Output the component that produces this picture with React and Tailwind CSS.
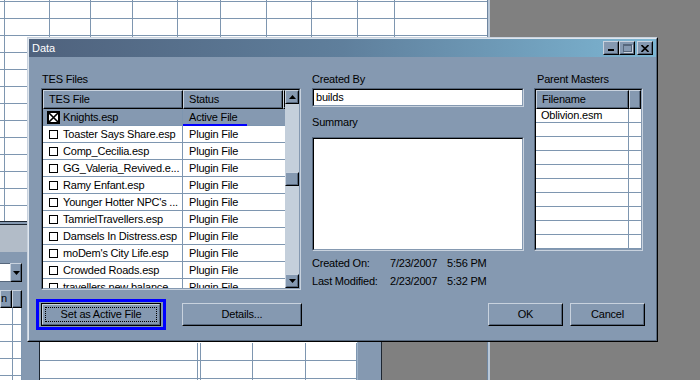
import React from "react";

const files = [
  ["Knights.esp", "Active File", true],
  ["Toaster Says Share.esp", "Plugin File"],
  ["Comp_Cecilia.esp", "Plugin File"],
  ["GG_Valeria_Revived.e...", "Plugin File"],
  ["Ramy Enfant.esp", "Plugin File"],
  ["Younger Hotter NPC's ...", "Plugin File"],
  ["TamrielTravellers.esp", "Plugin File"],
  ["Damsels In Distress.esp", "Plugin File"],
  ["moDem's City Life.esp", "Plugin File"],
  ["Crowded Roads.esp", "Plugin File"],
  ["travellers new balance...", "Plugin File"],
];

const masters = ["Oblivion.esm", "", "", "", "", "", "", "", "", "", ""];

function Sunken({ className = "", inner = "", children }) {
  return (
    <div className={"border border-t-[#56677c] border-l-[#56677c] border-b-[#c8d2de] border-r-[#c8d2de] " + className}>
      <div className={"w-full h-full border border-t-black border-l-black border-b-[#8599b1] border-r-[#8599b1] " + inner}>
        {children}
      </div>
    </div>
  );
}

function Raised({ className = "", inner = "", children }) {
  return (
    <div className={"border border-t-[#c8d2de] border-l-[#c8d2de] border-b-black border-r-black bg-[#8599b1] " + className}>
      <div className={"w-full h-full border border-t-[#8599b1] border-l-[#8599b1] border-b-[#56677c] border-r-[#56677c] flex items-center justify-center " + inner}>
        {children}
      </div>
    </div>
  );
}

function HeaderCell({ className = "", children }) {
  return (
    <div className={"h-full border border-t-[#c8d2de] border-l-[#c8d2de] border-b-black border-r-black " + className}>
      <div className="w-full h-full border-b border-r border-[#56677c] flex items-center pl-[5px] whitespace-nowrap overflow-hidden">
        {children}
      </div>
    </div>
  );
}

function Arrow({ up }) {
  return (
    <svg width="7" height="4" viewBox="0 0 7 4">
      {up ? <path d="M3.5 0 L7 4 L0 4 Z" fill="#000" /> : <path d="M0 0 L7 0 L3.5 4 Z" fill="#000" />}
    </svg>
  );
}

function Check({ checked }) {
  if (checked) {
    return (
      <svg width="13" height="13" viewBox="0 0 13 13" className="ml-[4px] mr-[3px] shrink-0">
        <rect x="1" y="1" width="11" height="11" fill="#fff" stroke="#000" strokeWidth="2" />
        <path d="M2 2 L11 11 M11 2 L2 11" stroke="#000" strokeWidth="1.6" />
      </svg>
    );
  }
  return <div className="ml-[6px] mr-[5px] w-[9px] h-[9px] border border-black bg-white shrink-0" />;
}

export default function App() {
  return (
    <div className="relative w-[700px] h-[380px] overflow-hidden bg-[#808080] font-['Liberation_Sans',Arial,sans-serif] text-[11px] leading-[13px] tracking-[-0.2px] text-black">
      {/* spreadsheet behind the dialog */}
      <div className="absolute left-0 top-0 w-[487px] h-[221px] bg-white overflow-hidden">
        <div className="grid grid-cols-[5px_45px_41px_42px_45px_43px_46px_45px_46px_37px_93px] auto-rows-[17px] -mt-[15px]">
          {Array.from({ length: 11 * 14 }).map((_, i) => (
            <div key={i} className="border-r border-b border-[#7e96b0]" />
          ))}
        </div>
      </div>
      <div className="absolute left-[487px] top-0 w-[3px] h-[380px] border-l border-[#6f86a0] bg-[#b9c7d6]" />

      {/* left pane */}
      <div className="absolute left-0 top-[221px] w-[27px] h-[159px] flex flex-col bg-[#8599b1]">
        <div className="h-[1px] bg-[#1d2631]" />
        <div className="h-[2px] bg-[#8599b1]" />
        <div className="h-[1px] bg-[#1d2631]" />
        <div className="h-[27px] bg-[#b2bcc8]" />
        <div className="h-[11px]" />
        <div className="flex h-[19px] w-[22px]">
          <div className="w-[10px] h-full bg-white border-y border-[#56677c]" />
          <Raised className="w-[12px] h-full">
            <Arrow />
          </Raised>
        </div>
        <div className="h-[8px]" />
        <div className="flex h-[18px] w-[22px]">
          <HeaderCell className="w-[12px]">
            <span className="-ml-[5px]">n</span>
          </HeaderCell>
          <HeaderCell className="w-[10px]" />
        </div>
        <div className="w-[22px] flex-1 bg-white grid grid-cols-[13px_9px] auto-rows-[17px] overflow-hidden">
          {Array.from({ length: 10 }).map((_, i) => (
            <div key={i} className="border-r border-b border-[#7e96b0]" />
          ))}
        </div>
      </div>

      {/* window under the dialog */}
      <div className="absolute left-[22px] top-[300px] w-[360px] h-[80px] flex">
        <div className="w-[17px] h-full bg-[#8599b1]" />
        <div className="w-[1px] h-full bg-[#1d2631]" />
        <div className="w-[317px] h-full bg-white overflow-hidden">
          <div className="grid grid-cols-[158px_3px_52px_53px_51px] auto-rows-[18px] mt-[43px]">
            {Array.from({ length: 15 }).map((_, i) => (
              <div key={i} className="border-r border-b border-[#7e96b0]" />
            ))}
          </div>
        </div>
        <div className="w-[1px] h-full bg-[#9fb4ca]" />
        <div className="w-[23px] h-full bg-[#8599b1]" />
        <div className="w-[1px] h-full bg-[#1d2631]" />
      </div>

      {/* Data dialog */}
      <div className="absolute left-[27px] top-[37px] w-[631px] h-[305px] border border-t-[#c8d2de] border-l-[#c8d2de] border-b-black border-r-black">
        <div className="w-full h-full border border-t-[#dfe6ee] border-l-[#dfe6ee] border-b-[#56677c] border-r-[#56677c] bg-[#8599b1] flex flex-col">
          <div className="h-[18px] flex items-center bg-linear-to-r from-[#4f627d] via-[#5f7f9c] to-[#7db6d3] pl-[3px] pr-[3px]">
            <span className="text-white tracking-normal">Data</span>
            <div className="ml-auto flex">
              <Raised className="w-[16px] h-[14px]" inner="items-end pb-[2px]">
                <div className="w-[6px] h-[2px] bg-black -ml-[1px]" />
              </Raised>
              <Raised className="w-[16px] h-[14px]">
                <div className="w-[9px] h-[8px] border border-[#56677c] border-t-2 shadow-[1px_1px_0_#c8d2de]" />
              </Raised>
              <Raised className="w-[16px] h-[14px] ml-[2px]">
                <svg width="8" height="7" viewBox="0 0 8 7">
                  <path d="M0.5 0 L7.5 7 M7.5 0 L0.5 7" stroke="#000" strokeWidth="1.6" />
                </svg>
              </Raised>
            </div>
          </div>

          <div className="flex-1 flex flex-col pt-[16px]">
            <div className="flex pl-[12px]">
              {/* TES Files */}
              <div className="w-[260px] flex flex-col">
                <div className="h-[13px] pl-[1px]">TES Files</div>
                <Sunken className="mt-[2px] h-[202px]" inner="bg-white flex overflow-hidden">
                  <div className="w-[242px] flex flex-col overflow-hidden">
                    <div className="flex h-[19px] shrink-0 bg-[#8599b1]">
                      <HeaderCell className="w-[140px]">TES File</HeaderCell>
                      <HeaderCell className="w-[100px]">Status</HeaderCell>
                      <HeaderCell className="w-[2px]" />
                    </div>
                    {files.map(([name, status, active]) => (
                      <div
                        key={name}
                        className={"flex h-[17px] shrink-0 border-b border-[#7e96b0] " + (active ? "bg-[#8599b1]" : "")}
                      >
                        <div className="w-[140px] flex items-center border-r border-[#7e96b0] whitespace-nowrap overflow-hidden">
                          <Check checked={active} />
                          <span>{name}</span>
                        </div>
                        <div className="relative w-[100px] flex items-center pl-[6px] whitespace-nowrap">
                          {status}
                          {active && <span className="absolute left-0 -bottom-[1px] w-[64px] h-[2px] bg-[#0000ff]" />}
                        </div>
                      </div>
                    ))}
                  </div>
                  <div className="w-[14px] flex flex-col bg-[#c4cfdb]">
                    <Raised className="h-[14px] shrink-0">
                      <Arrow up />
                    </Raised>
                    <div className="flex-1 flex flex-col">
                      <Raised className="h-[14px] mt-[68px]" />
                    </div>
                    <Raised className="h-[14px] shrink-0">
                      <Arrow />
                    </Raised>
                  </div>
                </Sunken>
              </div>

              {/* Created By / Summary */}
              <div className="ml-[11px] w-[212px] flex flex-col">
                <div className="h-[13px]">Created By</div>
                <Sunken className="mt-[2px] h-[19px]" inner="bg-white flex items-center pl-[2px]">
                  builds
                </Sunken>
                <div className="h-[13px] mt-[9px]">Summary</div>
                <Sunken className="mt-[8px] h-[114px]" inner="bg-white" />
                <div className="flex h-[13px] mt-[6px]">
                  <span className="w-[78px]">Created On:</span>
                  <span className="w-[57px]">7/23/2007</span>
                  <span>5:56 PM</span>
                </div>
                <div className="flex h-[13px] mt-[5px]">
                  <span className="w-[78px]">Last Modified:</span>
                  <span className="w-[57px]">2/23/2007</span>
                  <span>5:32 PM</span>
                </div>
              </div>

              {/* Parent Masters */}
              <div className="ml-[10px] w-[109px] flex flex-col">
                <div className="h-[13px] pl-[3px]">Parent Masters</div>
                <Sunken className="mt-[2px] h-[163px]" inner="bg-white flex flex-col overflow-hidden">
                  <div className="flex h-[19px] shrink-0 bg-[#8599b1]">
                    <HeaderCell className="w-[93px]">Filename</HeaderCell>
                    <HeaderCell className="flex-1" />
                  </div>
                  {masters.map((m, i) => (
                    <div key={i} className="flex h-[14px] shrink-0 border-b border-[#7e96b0]">
                      <div className="w-[93px] border-r border-[#7e96b0] flex items-center pl-[5px]">{m}</div>
                      <div className="flex-1" />
                    </div>
                  ))}
                </Sunken>
              </div>
            </div>

            {/* buttons */}
            <div className="flex items-center mt-[9px] pl-[7px] pr-[11px]">
              <div className="border-[3px] border-[#0000ff] px-[2px] py-[1px]">
                <div className="w-[120px] h-[23px] border border-black">
                  <div className="w-full h-full border border-t-[#c8d2de] border-l-[#c8d2de] border-b-[#56677c] border-r-[#56677c] p-[2px]">
                    <div className="w-full h-full border border-dotted border-black flex items-center justify-center">
                      Set as Active File
                    </div>
                  </div>
                </div>
              </div>
              <Raised className="ml-[16px] w-[120px] h-[23px]">Details...</Raised>
              <Raised className="ml-auto w-[75px] h-[23px]">OK</Raised>
              <Raised className="ml-[7px] w-[75px] h-[23px]">Cancel</Raised>
            </div>
          </div>
        </div>
      </div>
    </div>
  );
}
